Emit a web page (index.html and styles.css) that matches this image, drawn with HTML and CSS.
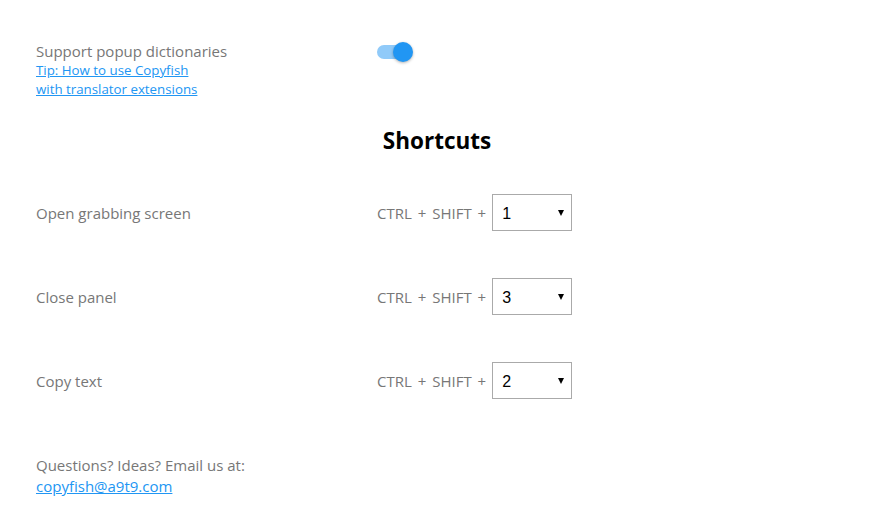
FILE: index.html
```html
<!DOCTYPE html>
<html lang="en">
<head>
    <meta charset="UTF-8">
    <title>Copyfish Options</title>
    <link rel="stylesheet" href="styles.css">
</head>
<body>
    <div class="option">
        <div class="label">
            <div>Support popup dictionaries</div>
            <div class="tip">
                <a href="#">Tip: How to use Copyfish<br>with translator extensions</a>
            </div>
        </div>
        <div class="control">
            <label class="toggle">
                <input type="checkbox" checked>
                <span class="track"></span>
                <span class="knob"></span>
            </label>
        </div>
    </div>

    <h2>Shortcuts</h2>

    <div class="shortcuts">
        <div class="option shortcut">
            <div class="label">Open grabbing screen</div>
            <div class="control">
                <span class="keys">CTRL + SHIFT +</span>
                <div class="select-wrap">
                    <select>
                        <option selected>1</option><option>2</option><option>3</option>
                    </select>
                </div>
            </div>
        </div>
        <div class="option shortcut">
            <div class="label">Close panel</div>
            <div class="control">
                <span class="keys">CTRL + SHIFT +</span>
                <div class="select-wrap">
                    <select>
                        <option>1</option><option>2</option><option selected>3</option>
                    </select>
                </div>
            </div>
        </div>
        <div class="option shortcut">
            <div class="label">Copy text</div>
            <div class="control">
                <span class="keys">CTRL + SHIFT +</span>
                <div class="select-wrap">
                    <select>
                        <option>1</option><option selected>2</option><option>3</option>
                    </select>
                </div>
            </div>
        </div>
    </div>

    <div class="footer">
        <div>Questions? Ideas? Email us at:</div>
        <a href="#">copyfish@a9t9.com</a>
    </div>
</body>
</html>
```

FILE: styles.css
```css
body {
    margin: 0;
    padding: 41px 36px 20px;
    font-family: "Open Sans", "Noto Sans", sans-serif;
    font-size: 15px;
    color: #777;
    background: #fff;
}
a {
    color: #2196f3;
}
.option {
    display: flex;
    align-items: flex-start;
    line-height: 20px;
}
.label {
    width: 341px;
    flex-shrink: 0;
}
.tip {
    font-size: 13.3px;
    line-height: 19px;
}
.control {
    display: flex;
    align-items: center;
}
.toggle {
    position: relative;
    display: block;
    width: 36px;
    height: 22px;
    cursor: pointer;
}
.toggle input {
    display: none;
}
.toggle .track {
    position: absolute;
    left: 0;
    top: 4px;
    width: 33px;
    height: 14px;
    border-radius: 7px;
    background: #90caf9;
}
.toggle .knob {
    position: absolute;
    left: 16px;
    top: 1px;
    width: 20px;
    height: 20px;
    border-radius: 50%;
    background: #2196f3;
    box-shadow: 0 1px 3px rgba(0, 0, 0, 0.3);
}
h2 {
    margin: 27px 0 0;
    text-align: center;
    font-size: 22.5px;
    line-height: 30px;
    color: #000;
    font-weight: bold;
}
.shortcuts {
    display: flex;
    flex-direction: column;
    gap: 47px;
    margin-top: 38px;
}
.shortcut {
    align-items: center;
}
.keys {
    margin-right: 6px;
    word-spacing: 2px;
}
.select-wrap {
    position: relative;
}
.select-wrap select {
    appearance: none;
    -webkit-appearance: none;
    width: 80px;
    height: 37px;
    padding: 1px 0 0 9px;
    border: 1px solid #aaa;
    border-radius: 0;
    background: #fff;
    font-family: "Liberation Sans", Arial, sans-serif;
    font-size: 16px;
    color: #000;
}
.select-wrap::after {
    content: "";
    position: absolute;
    right: 8px;
    top: 16px;
    border-left: 3.5px solid transparent;
    border-right: 3.5px solid transparent;
    border-top: 6px solid #000;
    pointer-events: none;
}
.footer {
    margin-top: 56px;
    line-height: 21px;
}
```
